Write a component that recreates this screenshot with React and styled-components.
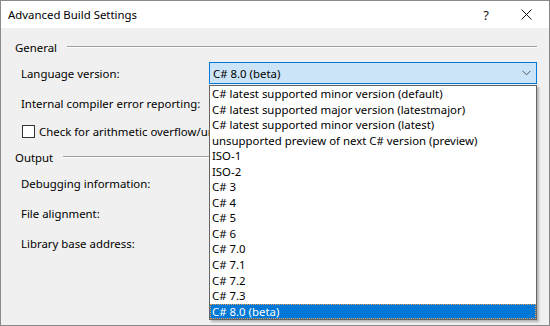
import React from "react";
import styled, { createGlobalStyle } from "styled-components";

const Global = createGlobalStyle`
  html, body { margin: 0; padding: 0; width: 550px; height: 326px; overflow: hidden; }
  body { font-family: "Noto Sans", "Liberation Sans", sans-serif; font-size: 11.4px; color: #000; }
`;

const Window = styled.div`
  position: relative;
  width: 550px;
  height: 326px;
  box-sizing: border-box;
  border: 1px solid #8a8a8a;
  background: #f0f0f0;
  display: flex;
  flex-direction: column;
`;

const TitleBar = styled.div`
  height: 27px;
  background: #fff;
  display: flex;
  align-items: center;
  padding-left: 7px;
  flex-shrink: 0;
`;

const Title = styled.div`
  flex: 1;
`;

const TitleButton = styled.div`
  width: ${p => p.$w}px;
  display: flex;
  align-items: center;
  justify-content: center;
  font-size: 13px;
  color: #111;
`;

const Content = styled.div`
  display: flex;
  flex-direction: column;
  padding: 11px 12px 0 14px;
`;

const GroupHeader = styled.div`
  display: flex;
  align-items: center;
  height: 16px;
  gap: 10px;
  margin-top: ${p => p.$mt || 0}px;
`;

const GroupLine = styled.div`
  flex: 1;
  height: 0;
  border-top: 1px solid #a0a0a0;
  border-bottom: 1px solid #ffffff;
`;

const Row = styled.div`
  display: flex;
  align-items: center;
  height: ${p => p.$h || 30}px;
  margin-top: ${p => p.$mt || 0}px;
  padding-left: 6px;
`;

const Label = styled.div`
  width: 188px;
  white-space: nowrap;
`;

const Combo = styled.div`
  flex: 1;
  height: 22px;
  box-sizing: border-box;
  border: 1px solid #0078d7;
  background: #cce4f7;
  display: flex;
  align-items: center;
  padding-left: 3px;
  padding-right: 5px;
`;

const ComboText = styled.div`
  flex: 1;
`;

const Check = styled.div`
  width: 11px;
  height: 11px;
  border: 1px solid #333;
  background: #fff;
  margin-left: 1px;
  margin-right: 4px;
  flex-shrink: 0;
`;

const CheckLabel = styled.div`
  white-space: nowrap;
  overflow: hidden;
  width: 170px;
`;

const List = styled.div`
  position: absolute;
  left: 208px;
  top: 84px;
  width: 328px;
  box-sizing: border-box;
  border: 1px solid #646464;
  background: #fff;
  box-shadow: 2px 2px 2px rgba(0, 0, 0, 0.25);
  display: flex;
  flex-direction: column;
`;

const Item = styled.div`
  height: 15.55px;
  line-height: 15.55px;
  padding-left: 2px;
  white-space: nowrap;
  box-sizing: border-box;
  background: ${p => (p.$sel ? "#0078d7" : "transparent")};
  color: ${p => (p.$sel ? "#fff" : "#000")};
  outline: ${p => (p.$sel ? "1px dotted #e8a050" : "none")};
  outline-offset: -1px;
`;

const Chevron = () => (
  <svg width="9" height="6" viewBox="0 0 9 6">
    <path d="M0.5 0.8 L4.5 4.8 L8.5 0.8" fill="none" stroke="#555" strokeWidth="1" />
  </svg>
);

const items = [
  "C# latest supported minor version (default)",
  "C# latest supported major version (latestmajor)",
  "C# latest supported minor version (latest)",
  "unsupported preview of next C# version (preview)",
  "ISO-1",
  "ISO-2",
  "C# 3",
  "C# 4",
  "C# 5",
  "C# 6",
  "C# 7.0",
  "C# 7.1",
  "C# 7.2",
  "C# 7.3",
  "C# 8.0 (beta)",
];

export default function App() {
  return (
    <>
      <Global />
      <Window>
        <TitleBar>
          <Title>Advanced Build Settings</Title>
          <TitleButton $w={34}>?</TitleButton>
          <TitleButton $w={46}>
            <svg width="11" height="11" viewBox="0 0 11 11">
              <path d="M0.5 0.5 L10.5 10.5 M10.5 0.5 L0.5 10.5" stroke="#111" strokeWidth="1" />
            </svg>
          </TitleButton>
        </TitleBar>
        <Content>
          <GroupHeader>
            <span>General</span>
            <GroupLine />
          </GroupHeader>
          <Row $h={22} $mt={7}>
            <Label>Language version:</Label>
            <Combo>
              <ComboText>C# 8.0 (beta)</ComboText>
              <Chevron />
            </Combo>
          </Row>
          <Row $mt={4}>
            <Label>Internal compiler error reporting:</Label>
          </Row>
          <Row $h={26}>
            <Check />
            <CheckLabel>Check for arithmetic overflow/underflow</CheckLabel>
          </Row>
          <GroupHeader $mt={5}>
            <span>Output</span>
            <GroupLine />
          </GroupHeader>
          <Row $mt={3}>
            <Label>Debugging information:</Label>
          </Row>
          <Row>
            <Label>File alignment:</Label>
          </Row>
          <Row>
            <Label>Library base address:</Label>
          </Row>
        </Content>
        <List>
          {items.map((t, i) => (
            <Item key={t} $sel={i === items.length - 1}>{t}</Item>
          ))}
        </List>
      </Window>
    </>
  );
}
